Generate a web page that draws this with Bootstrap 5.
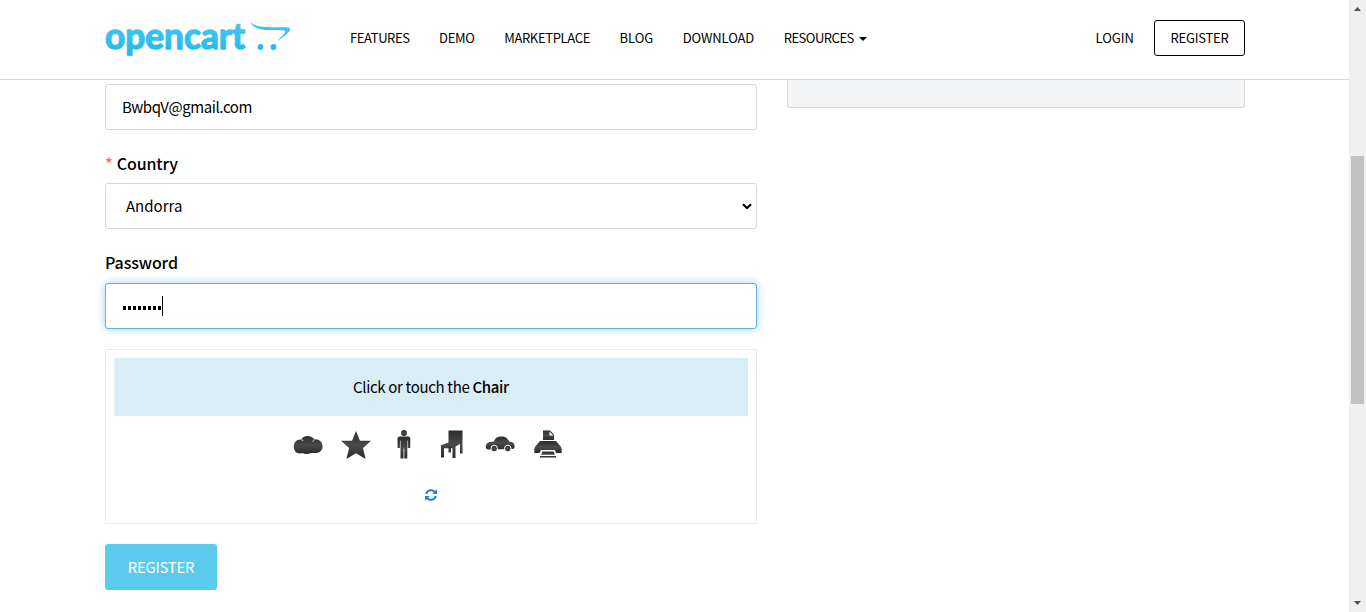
<!DOCTYPE html>
<html lang="en">
<head>
<meta charset="utf-8">
<meta name="viewport" content="width=device-width, initial-scale=1">
<title>OpenCart - Account Register</title>
<link href="https://cdn.jsdelivr.net/npm/bootstrap@5.3.0/dist/css/bootstrap.min.css" rel="stylesheet">
<style>
body{font-family:"Noto Sans CJK SC","Open Sans",sans-serif;font-size:15px;line-height:24px;color:#000;height:612px;overflow:hidden;background:#fff}
.page{width:1349px;height:612px}
.wrap{width:1140px;margin-left:105px}
.site-head{height:80px;border-bottom:1px solid #d6d7d9;padding-bottom:3px}
.site-head a{font-size:13px;color:#000;text-decoration:none;line-height:20px;white-space:nowrap}
.brand{width:245px;height:76px}
.menu{gap:29.5px}
.menu a:nth-child(1){letter-spacing:-.4px}
.menu a:nth-child(2){letter-spacing:-.3px}
.menu a:nth-child(3){letter-spacing:-.35px}
.menu a:nth-child(5){letter-spacing:-.12px}
.menu a:nth-child(6){letter-spacing:-.5px}
.menu .dropdown-toggle::after{margin-left:5px;vertical-align:2px;border-top-width:4px;border-left-width:4px;border-right-width:4px}
.site-head .reg{border:1px solid #000;border-radius:3px;width:91px;height:36px;line-height:34px;text-align:center;margin-left:20px;letter-spacing:-.25px}
.form-col{width:652px;padding-top:4px}
.site-form .form-control,.site-form .form-select{height:46px;border:1px solid #d6d7d9;border-radius:3px;padding:0 16px;font-size:15px;color:#000;line-height:44px;box-shadow:none}
.site-form .email{letter-spacing:-.43px}
.site-form .form-select{padding-left:20px;background-image:none}
.site-form .active-field{border-color:#66afe9;box-shadow:0 0 8px rgba(102,175,233,.6)}
.lbl{height:53px;padding-top:21px;font-weight:500;font-size:16px;white-space:nowrap;letter-spacing:-.1px}
.lbl.pass{height:54px}
.lbl i{color:#f66;font-style:normal;font-weight:500;margin-right:.5px}
.arrow{position:absolute;right:4px;top:19px}
.dots{gap:2px;padding:4px 1px 0 1px}
.dots i{width:3px;height:4px;background:#000}
.caret-line{width:1px;height:20px;background:#000}
.captcha{margin-top:20px;height:175px;border:1px solid #ebebeb;padding:8px}
.prompt{height:58px;background:#d9edf7;line-height:57px;letter-spacing:-.33px}
.prompt b{font-weight:500}
.icons{height:58px;padding-right:7px}
.icons svg{width:32px;height:32px;margin:0 8px;fill:url(#dark)}
.refresh-row{padding-top:15px}
.submit,.submit:hover{margin-top:20px;width:112px;height:46px;background:#5bcaef;border:0;border-radius:3px;color:#fff;font-size:15px;padding:0;letter-spacing:-.3px}
.side{width:458px;height:28px;margin-left:30px;background:#f3f4f6;border:1px solid #d6d7d9;border-top:0;border-radius:0 0 3px 3px}
.scroller{width:17px;height:612px;background:#f0f0f0}
.scroller .thumb{width:13px;height:248px;margin:137px auto 0;background:#c1c1c1}
</style>
</head>
<body class="d-flex">
<div class="page">
<header class="site-head">
<div class="wrap d-flex align-items-center h-100">
<a class="brand" href="#" aria-label="OpenCart">
<svg width="190" height="76" viewBox="0 0 190 76">
<defs><linearGradient id="blue" x1="0" y1="22" x2="0" y2="58" gradientUnits="userSpaceOnUse"><stop offset="0" stop-color="#45c7ef"/><stop offset="1" stop-color="#1fb6ec"/></linearGradient></defs>
<text x="0" y="49" textLength="140" lengthAdjust="spacingAndGlyphs" font-family="Lato" font-weight="700" font-size="36" fill="url(#blue)" stroke="url(#blue)" stroke-width="1.300" stroke-linejoin="round">opencart</text>
<path fill="url(#blue)" d="M145.500 22c4 4 9 5 20 5.300 9 .2 18-1 19.400 1.200 1.300 2-4.500 7-12.400 12.800 4.500-5.300 8-8.600 7.800-9.900-.3-1.400-8-.9-16-1.300C152.500 29.500 147.500 27 145.500 22z"/>
<circle cx="155.500" cy="47" r="2.900" fill="url(#blue)"/><circle cx="168.500" cy="47" r="2.900" fill="url(#blue)"/>
</svg></a>
<nav class="menu d-flex">
<a href="#">FEATURES</a><a href="#">DEMO</a><a href="#">MARKETPLACE</a><a href="#">BLOG</a><a href="#">DOWNLOAD</a><a href="#" class="dropdown-toggle">RESOURCES</a>
</nav>
<a href="#" class="ms-auto">LOGIN</a><a href="#" class="reg">REGISTER</a>
</div>
</header>
<main class="wrap d-flex align-items-start">
<form class="site-form form-col">
<div class="form-control email">BwbqV@gmail.com</div>
<div class="lbl"><i>*</i> Country</div>
<div class="position-relative">
<div class="form-select">Andorra</div>
<svg class="arrow" width="12" height="9" viewBox="0 0 12 9"><path d="M2 2.300l4 3.700 4-3.700" fill="none" stroke="#000" stroke-width="2.200"/></svg>
</div>
<div class="lbl pass">Password</div>
<div class="form-control active-field d-flex align-items-center">
<span class="dots d-flex"><i></i><i></i><i></i><i></i><i></i><i></i><i></i><i></i></span><span class="caret-line"></span>
</div>
<div class="captcha">
<div class="prompt text-center">Click or touch the <b>Chair</b></div>
<div class="icons d-flex justify-content-center align-items-center">
<svg viewBox="0 0 32 32"><defs><linearGradient id="dark" x1="0" y1="0" x2="0" y2="1"><stop offset="0" stop-color="#2c2c2c"/><stop offset=".5" stop-color="#4a4a4a"/><stop offset="1" stop-color="#2a2a2a"/></linearGradient></defs><path d="M8 24.500C4 24.500 1.800 21.700 1.800 17.500 1.800 13 5 10 9 10.500c1.500-2.500 4-3.500 6.500-3.500 3 0 5.300 1.300 6.800 3.300 4.600-.6 8.300 2.700 8.300 7 0 4-2.700 6.500-6.200 6.700-3 .2-4.500-.2-6 .3-2.500.8-4.500.8-6.500.1-1.500-.2-2.500.1-3.900.1z"/><path d="M9 10.500l2.500 1.300M22.300 10.300l-1.800 2.600" stroke="#ddd" stroke-width=".8" fill="none"/></svg>
<svg viewBox="0 0 32 32"><path d="M16 2l4 9.700H31l-8 7.300L25.600 30 16 24.300 6.400 30l2.700-11L1 11.700h11z"/></svg>
<svg viewBox="0 0 32 32"><circle cx="16" cy="4" r="3"/><path d="M11 7.500h10l1.300 1.500v10h-2.500v-7.500h-.5V29.500h-3V19.500h-.8v10h-3V11.500H12V19H9.500V9z"/></svg>
<svg viewBox="0 0 32 32"><path d="M12.500 1.500h14v23H24v-9.500l-4.500 2.500V29h-3V19.200H8V28.500H5V16.300L12.500 13.500z"/><path d="M12.500 18h2.500v5.500h-2.500z"/></svg>
<svg viewBox="0 0 32 32"><path d="M2 19.500c-.8-3 .5-6 4-6.500l4-.6C11.300 9 13 7.800 16.500 7.500c5-.3 6.700 1.500 8.800 5.200 3.700 0 5.700 1.500 5.200 5.300 0 1-.5 1.500-1.500 2L4 20.500z"/><circle cx="10.200" cy="19.500" r="3.300" stroke="#fff"/><circle cx="23.800" cy="19.500" r="3.300" stroke="#fff"/></svg>
<svg viewBox="0 0 32 32"><path d="M11 1.500h7l4 4V11H11z"/><path d="M17.500 2.500v4h3.700z" fill="#fff"/><path d="M8 12h16l3 3.500c1.800 2 2.700 3 2.700 5V24H24l-1-3H9l-1.500 3H2.300v-3.500c0-2 1-3 2.700-5z"/><path d="M10.500 22.500h11l1.500 3.200H9zM8 27h16v1.500H8z"/></svg>
</div>
<div class="d-flex justify-content-center refresh-row">
<svg width="12" height="12" viewBox="0 0 12 12"><path fill="none" stroke="#247bd1" stroke-width="2" d="M1.200 5C2.200 1.200 6.800-.2 9.800 2.800M10.800 7C9.800 10.800 5.200 12.200 2.200 9.200"/><path fill="#247bd1" d="M12 .3V5H7.300zM0 11.700V7h4.700z"/></svg>
</div>
</div>
<button type="button" class="submit btn">REGISTER</button>
</form>
<aside class="side"></aside>
</main>
</div>
<div class="scroller d-flex flex-column align-items-center">
<svg width="17" height="19" viewBox="0 0 17 19"><path d="M5 11h7L8.500 7z" fill="#505050"/></svg>
<div class="thumb"></div>
<svg class="mt-auto" width="17" height="17" viewBox="0 0 17 17"><path d="M5 6h7l-3.500 4z" fill="#505050"/></svg>
</div>
<script src="https://cdn.jsdelivr.net/npm/bootstrap@5.3.0/dist/js/bootstrap.bundle.min.js"></script>
</body>
</html>
